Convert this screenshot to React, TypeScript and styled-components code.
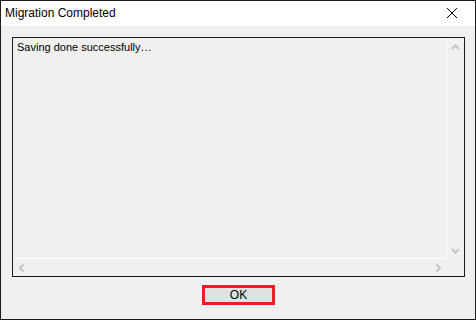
import React from 'react';
import styled, { createGlobalStyle } from 'styled-components';

const GlobalStyle = createGlobalStyle`
  html, body {
    margin: 0;
    padding: 0;
    background: #ffffff;
  }
  * {
    box-sizing: border-box;
  }
`;

const Window = styled.div`
  width: 476px;
  height: 320px;
  display: flex;
  flex-direction: column;
  border: 1px solid #1c1c1c;
  background: #f0f0f0;
  font-family: 'Liberation Sans', Arial, sans-serif;
  color: #000;
`;

const TitleBar = styled.header`
  height: 25px;
  flex: none;
  display: flex;
  align-items: center;
  justify-content: space-between;
  background: #ffffff;
  padding: 0 0 0 4px;
`;

const Title = styled.h1`
  margin: 0;
  font-size: 12px;
  font-weight: normal;
  line-height: 14px;
  padding-bottom: 1px;
`;

const CloseButton = styled.button`
  width: 46px;
  height: 25px;
  border: 0;
  background: transparent;
  display: flex;
  align-items: center;
  justify-content: center;
  padding: 0 0 1px 0;
`;

const Body = styled.section`
  flex: 1;
  display: flex;
  flex-direction: column;
  padding: 11px 10px 0 11px;
`;

const TextBox = styled.div`
  height: 240px;
  flex: none;
  border: 1px solid #1a1a1a;
  display: grid;
  grid-template-columns: 1fr 17px;
  grid-template-rows: 1fr 17px;
`;

const Content = styled.div`
  border-right: 1px solid #ffffff;
  border-bottom: 1px solid #ffffff;
  padding: 3px 4px;
  font-size: 11px;
  line-height: 13px;
`;

const ScrollBar = styled.div<{ $vertical?: boolean }>`
  display: flex;
  flex-direction: ${p => (p.$vertical ? 'column' : 'row')};
  justify-content: space-between;
  align-items: center;
`;

const Arrow = styled.span`
  width: 17px;
  height: 17px;
  display: flex;
  align-items: center;
  justify-content: center;
`;

const Corner = styled.div``;

const Footer = styled.footer`
  flex: 1;
  display: flex;
  justify-content: center;
  padding-top: 8px;
`;

const OkButton = styled.button`
  width: 73px;
  height: 20px;
  border: 3px solid #ed1c24;
  background: #e1e1e1;
  font-family: 'Liberation Sans', Arial, sans-serif;
  font-size: 12px;
  line-height: 12px;
  color: #000;
  padding: 0;
`;

const Chevron = ({ rotate }: { rotate: number }) => (
  <svg width="9" height="6" viewBox="0 0 9 6" style={{ transform: `rotate(${rotate}deg)` }}>
    <path d="M1 5 L4.5 1.5 L8 5" fill="none" stroke="#c4c4c4" strokeWidth="2" />
  </svg>
);

export default function App() {
  return (
    <>
      <GlobalStyle />
      <Window>
        <TitleBar>
          <Title>Migration Completed</Title>
          <CloseButton aria-label="Close">
            <svg width="10" height="10" viewBox="0 0 10 10">
              <path d="M0 0 L10 10 M10 0 L0 10" stroke="#000" strokeWidth="1" />
            </svg>
          </CloseButton>
        </TitleBar>
        <Body>
          <TextBox>
            <Content>Saving done successfully…</Content>
            <ScrollBar $vertical>
              <Arrow><Chevron rotate={0} /></Arrow>
              <Arrow><Chevron rotate={180} /></Arrow>
            </ScrollBar>
            <ScrollBar>
              <Arrow><Chevron rotate={-90} /></Arrow>
              <Arrow><Chevron rotate={90} /></Arrow>
            </ScrollBar>
            <Corner />
          </TextBox>
          <Footer>
            <OkButton>OK</OkButton>
          </Footer>
        </Body>
      </Window>
    </>
  );
}
